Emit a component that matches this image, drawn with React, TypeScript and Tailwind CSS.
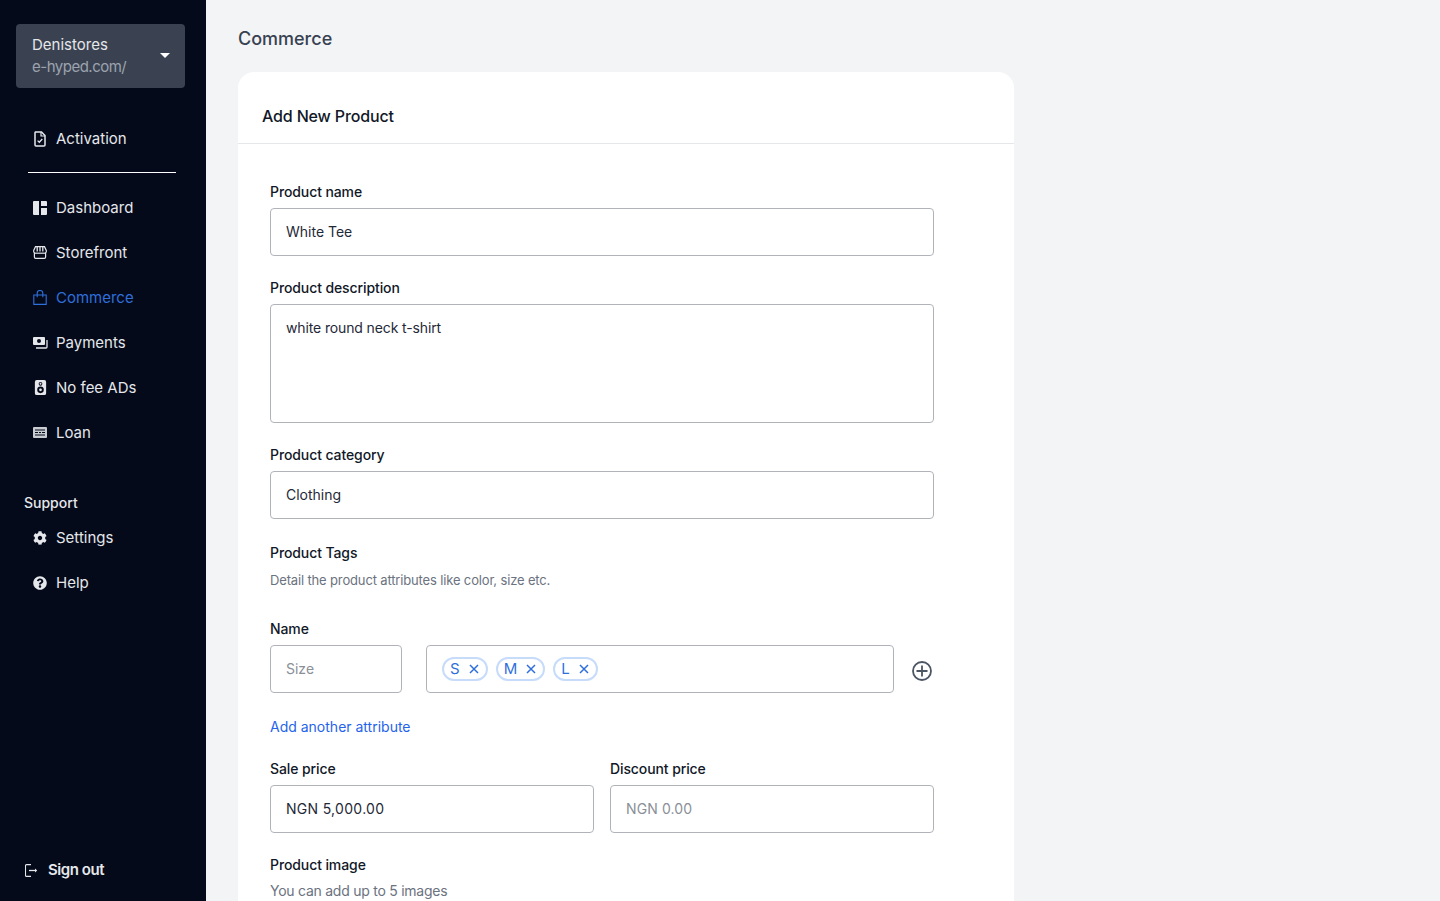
import React from 'react';
import { FaCog, FaQuestionCircle } from 'react-icons/fa';
import { BsSpeakerFill } from 'react-icons/bs';

const FileIcon = () => (
  <svg width="14" height="16" viewBox="0 0 14 16" fill="none" stroke="currentColor" strokeWidth="1.5">
    <path d="M2.5 1h6l3.5 3.5V14a1 1 0 0 1-1 1H3a1 1 0 0 1-1-1V2a1 1 0 0 1 .5-1z" />
    <path d="M8 1v4h4" strokeWidth="1.2" />
    <path d="M4.6 9.6l1.7 1.7 3-3.3" strokeWidth="1.3" />
  </svg>
);

const DashboardIcon = () => (
  <svg width="14" height="14" viewBox="0 0 14 14" fill="currentColor">
    <path d="M1 0h5v14H1a1 1 0 0 1-1-1V1a1 1 0 0 1 1-1z" />
    <path d="M8 0h5a1 1 0 0 1 1 1v4H8z" />
    <path d="M8 7h6v6a1 1 0 0 1-1 1H8z" />
  </svg>
);

const StoreIcon = () => (
  <svg width="14" height="13" viewBox="0 0 14 13" fill="none" stroke="currentColor" strokeWidth="1.2">
    <path d="M2.5.7h9L13.3 4.5v1a1.4 1.4 0 0 1-.7 1.2V11a1.3 1.3 0 0 1-1.3 1.3H2.7A1.3 1.3 0 0 1 1.4 11V6.7A1.4 1.4 0 0 1 .7 5.5v-1z" />
    <path d="M1.5 7.2h11" />
    <path d="M4.2 1v4.5M7 1v4.5M9.8 1v4.5" strokeWidth="1.3" />
  </svg>
);

const BagIcon = () => (
  <svg width="14" height="15" viewBox="0 0 14 15" fill="none" stroke="currentColor" strokeWidth="1.1">
    <path d="M.8 5h12.4v9.4H.8z" />
    <path d="M4.2 7.2V3.3a2.8 2.8 0 0 1 5.6 0v3.9" />
  </svg>
);

const CashIcon = () => (
  <svg width="15" height="12" viewBox="0 0 15 12" fill="none">
    <path d="M0 1a1 1 0 0 1 1-1h10a1 1 0 0 1 1 1v6a1 1 0 0 1-1 1H1a1 1 0 0 1-1-1z" fill="currentColor" />
    <circle cx="6" cy="4" r="2" fill="#040a1a" />
    <path d="M14 3v7a1 1 0 0 1-1 1H3" stroke="currentColor" strokeWidth="1.3" />
  </svg>
);

const LoanIcon = () => (
  <svg width="14" height="11" viewBox="0 0 14 11" fill="none">
    <rect x="0" y="0" width="14" height="11" rx="1" fill="#c9ccd1" />
    <path d="M2 3h10M2 5.5h3M6 5.5h2M9 5.5h3M2 8h10" stroke="#040a1a" strokeWidth="1" />
  </svg>
);

const SignOutIcon = () => (
  <svg width="13" height="13" viewBox="0 0 13 13" fill="none" stroke="currentColor" strokeWidth="1.1">
    <path d="M6 .6H1.5a1 1 0 0 0-1 1v9.8a1 1 0 0 0 1 1H6" />
    <path d="M4 6.5h7" strokeWidth="1.3" />
    <path d="M10 4.6l2.2 1.9L10 8.4z" fill="currentColor" stroke="none" />
  </svg>
);

const NavItem = ({ icon, label, active }: { icon: React.ReactNode; label: string; active?: boolean }) => (
  <a className={`flex h-[45px] items-center text-[15px] ${active ? 'text-[#2f6fdb]' : 'text-[#e5e7eb]'}`}>
    <span className="flex w-[56px] justify-center pb-[2px] pl-[24px]">{icon}</span>
    {label}
  </a>
);

const Field = ({ label, children, className }: { label: string; children: React.ReactNode; className?: string }) => (
  <div className={className}>
    <div className="mb-1 h-6 text-[14px] font-medium leading-6 tracking-[-0.1px] text-[#111827]">{label}</div>
    {children}
  </div>
);

const Input = ({ value, placeholder, className }: { value?: string; placeholder?: string; className?: string }) => (
  <div className={`flex h-12 items-center rounded border border-[#b0b4ba] bg-white px-[15px] pb-[2px] text-[14px] ${placeholder ? 'text-[#8a8f98]' : 'text-[#1f2937]'} ${className ?? ''}`}>
    {value ?? placeholder}
  </div>
);

const Tag = ({ label }: { label: string }) => (
  <span className="flex h-6 items-center gap-[9px] rounded-full border-2 border-[#c7dbfb] pl-[6px] pr-[7px] text-[15px] text-[#2f6fdb]">
    {label}
    <svg width="10" height="10" viewBox="0 0 10 10" stroke="currentColor" strokeWidth="1.5">
      <path d="M1 1l8 8M9 1l-8 8" />
    </svg>
  </span>
);

export default function App() {
  return (
    <div className="flex h-[901px] overflow-hidden bg-[#f3f4f6] font-['Inter','Liberation_Sans',sans-serif]">
      <aside className="flex w-[206px] shrink-0 flex-col bg-[#040a1a] pt-6">
        <div className="mx-4 flex h-16 w-[169px] items-center justify-between rounded bg-[#3a4251] pl-4 pr-[15px]">
          <div>
            <div className="text-[15px] leading-[22px] text-[#e5e7eb]">Denistores</div>
            <div className="text-[15px] leading-[22px] tracking-[-0.5px] text-[#9ca3af]">e-hyped.com/</div>
          </div>
          <span className="mb-px h-0 w-0 border-x-[5px] border-t-[5px] border-x-transparent border-t-white" />
        </div>

        <nav className="mt-[29px]">
          <NavItem icon={<FileIcon />} label="Activation" />
          <div className="mx-7 mb-[13px] mt-[10px] h-px w-[148px] bg-white" />
          <NavItem icon={<DashboardIcon />} label="Dashboard" />
          <NavItem icon={<StoreIcon />} label="Storefront" />
          <NavItem icon={<BagIcon />} label="Commerce" active />
          <NavItem icon={<CashIcon />} label="Payments" />
          <NavItem icon={<BsSpeakerFill size={15} />} label="No fee ADs" />
          <NavItem icon={<LoanIcon />} label="Loan" />
        </nav>

        <div className="mt-[35px] pl-6 text-[14px] font-medium leading-6 text-[#e5e7eb]">Support</div>
        <div className="mt-px">
          <NavItem icon={<FaCog size={14} />} label="Settings" />
          <NavItem icon={<FaQuestionCircle size={14} />} label="Help" />
        </div>

        <div className="mb-[19px] mt-auto flex h-6 items-center gap-[10px] pl-[25px] text-[15px] font-semibold tracking-[-0.45px] text-[#e5e7eb]">
          <SignOutIcon />
          Sign out
        </div>
      </aside>

      <main className="min-w-0 flex-1 pl-8 pt-[24px]">
        <h1 className="mb-[18px] h-[30px] text-[18px] font-medium leading-[30px] text-[#374151]">Commerce</h1>

        <section className="w-[776px] rounded-t-2xl bg-white">
          <div className="flex h-[72px] items-end border-b border-[#e5e7eb] px-6 pb-[15px] text-[16px] font-medium leading-6 tracking-[-0.15px] text-[#111827]">
            Add New Product
          </div>

          <div className="w-[696px] pl-8 pt-9">
            <Field label="Product name">
              <Input value="White Tee" />
            </Field>

            <Field label="Product description" className="mt-5">
              <div className="h-[119px] rounded border border-[#b0b4ba] px-[15px] py-[11px] text-[14px] leading-6 tracking-[-0.13px] text-[#1f2937]">
                white round neck t-shirt
              </div>
            </Field>

            <Field label="Product category" className="mt-5">
              <Input value="Clothing" />
            </Field>

            <div className="mt-[22px] h-6 text-[14px] font-medium leading-6 tracking-[-0.1px] text-[#111827]">Product Tags</div>
            <div className="mt-[3px] h-6 text-[13px] leading-6 tracking-[-0.15px] text-[#6b7280]">Detail the product attributes like color, size etc.</div>

            <div className="mt-[25px] flex items-end">
              <Field label="Name" className="w-[132px] shrink-0">
                <Input placeholder="Size" />
              </Field>
              <div className="ml-6 flex h-12 w-[468px] shrink-0 items-center gap-2 rounded border border-[#b0b4ba] pl-[15px]">
                <Tag label="S" />
                <Tag label="M" />
                <Tag label="L" />
              </div>
              <svg className="mb-[12px] ml-[18px] shrink-0" width="20" height="20" viewBox="0 0 20 20" fill="none" stroke="#4b5563" strokeWidth="1.8">
                <circle cx="10" cy="10" r="9" />
                <path d="M10 4.5v11M4.5 10h11" />
              </svg>
            </div>

            <div className="mt-[22px] h-6 text-[14px] leading-6 text-[#2563eb]">Add another attribute</div>

            <div className="mt-[18px] flex gap-4">
              <Field label="Sale price" className="w-[324px]">
                <Input value="NGN 5,000.00" className="tracking-[0.3px]" />
              </Field>
              <Field label="Discount price" className="w-[324px]">
                <Input placeholder="NGN 0.00" className="tracking-[0.1px]" />
              </Field>
            </div>

            <div className="mt-5 h-6 text-[14px] font-medium leading-6 tracking-[-0.1px] text-[#111827]">Product image</div>
            <div className="mt-[2px] h-6 text-[14px] leading-6 tracking-[-0.25px] text-[#6b7280]">You can add up to 5 images</div>
          </div>
        </section>
      </main>
    </div>
  );
}
